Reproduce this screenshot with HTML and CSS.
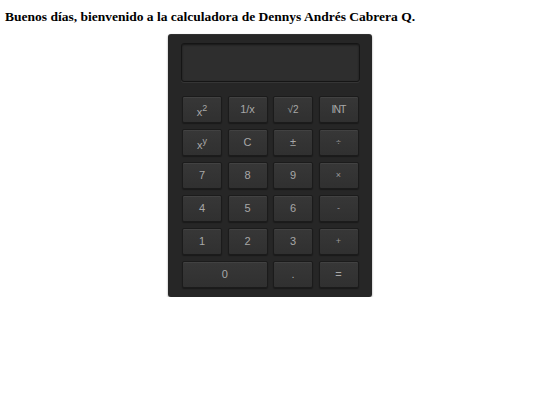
FILE: index.html
```html
<!DOCTYPE html>
<html lang="es">
<head>
<meta charset="utf-8">
<title>Calculadora</title>
<link rel="stylesheet" href="styles.css">
</head>
<body>
<h1 class="title">Buenos días, bienvenido a la calculadora de Dennys Andrés Cabrera Q.</h1>
<div class="calc">
  <div class="display"></div>
  <div class="keys">
    <button class="key pow">x<sup>2</sup></button>
    <button class="key">1/x</button>
    <button class="key small">√2</button>
    <button class="key tight">INT</button>
    <button class="key pow">x<sup>y</sup></button>
    <button class="key">C</button>
    <button class="key">±</button>
    <button class="key op">÷</button>
    <button class="key">7</button>
    <button class="key">8</button>
    <button class="key">9</button>
    <button class="key op">×</button>
    <button class="key">4</button>
    <button class="key">5</button>
    <button class="key">6</button>
    <button class="key op">-</button>
    <button class="key">1</button>
    <button class="key">2</button>
    <button class="key">3</button>
    <button class="key op">+</button>
    <button class="key zero">0</button>
    <button class="key">.</button>
    <button class="key">=</button>
  </div>
</div>
</body>
</html>
```
FILE: styles.css
```css
html, body {
  margin: 0;
  padding: 0;
  background: #ffffff;
}
.title {
  margin: 0;
  padding: 9px 0 0 5px;
  font-family: "Liberation Serif", "Times New Roman", serif;
  font-weight: bold;
  font-size: 13.5px;
  line-height: 16px;
  color: #000;
}
.calc {
  width: 178px;
  margin: 9px auto 0;
  padding: 9px 13px 9px 13px;
  background: #262626;
  border-radius: 3px;
  box-shadow: 0 1px 2px rgba(0,0,0,0.45), inset 0 1px 0 rgba(255,255,255,0.05);
}
.display {
  height: 37px;
  width: 177px;
  background: #2e2e2e;
  border: 1px solid #151515;
  border-radius: 3px;
  box-shadow: inset 0 1px 2px rgba(0,0,0,0.5), 0 1px 0 rgba(255,255,255,0.07);
  margin-bottom: 14px;
}
.keys {
  display: grid;
  grid-template-columns: repeat(4, 40px);
  grid-auto-rows: 27px;
  column-gap: 5.5px;
  row-gap: 6px;
  margin-left: 1px;
}
.key {
  margin: 0;
  padding: 0;
  border: 1px solid #1b1b1b;
  border-radius: 2px;
  background: linear-gradient(#373737, #303030);
  box-shadow: inset 0 1px 0 rgba(255,255,255,0.06), 0 1px 1px rgba(0,0,0,0.35);
  color: #a8a8a8;
  font-family: "Liberation Sans", Arial, sans-serif;
  font-size: 11px;
  line-height: 25px;
  text-align: center;
  cursor: pointer;
}
.pow {
  padding-top: 3px;
}
.key sup {
  font-size: 9px;
  line-height: 0;
  vertical-align: 5px;
}
.small {
  font-size: 10px;
}
.tight {
  letter-spacing: -1px;
  font-size: 10.5px;
}
.op {
  font-size: 9px;
  color: #999;
}
.zero {
  grid-column: span 2;
}
```
